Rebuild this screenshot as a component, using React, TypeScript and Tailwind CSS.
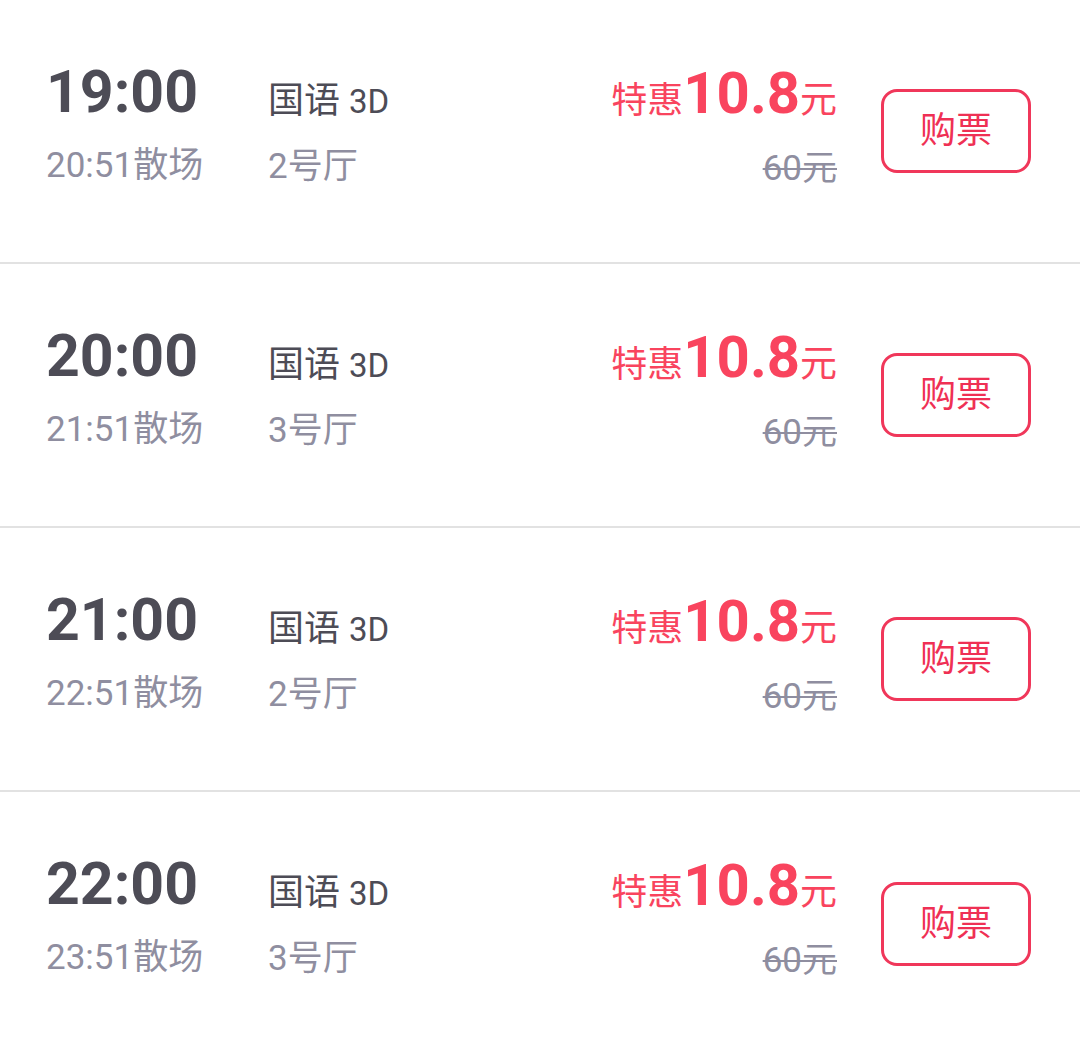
const shows = [
  { start: '19:00', end: '20:51', hall: '2号厅' },
  { start: '20:00', end: '21:51', hall: '3号厅' },
  { start: '21:00', end: '22:51', hall: '2号厅' },
  { start: '22:00', end: '23:51', hall: '3号厅' },
];

const font = "font-['Roboto','Noto_Sans_CJK_SC',sans-serif]";

export default function App() {
  return (
    <div className={`w-[1080px] h-[1054px] bg-white overflow-hidden ${font}`}>
      {shows.map((s, i) => (
        <div
          key={i}
          className={`flex items-center h-[264px] pl-[46px] pr-[49px] ${i < shows.length - 1 ? 'border-b-2 border-[#e2e2e2]' : ''}`}
        >
          <div className="flex-1 self-stretch flex items-start pt-[62px]">
            {/* start time / end time */}
            <div className="w-[222px] flex flex-col">
              <div className="text-[59px] font-bold text-[#4d4c56] leading-[60px]">{s.start}</div>
              <div className="text-[35px] text-[#8f8ea0] leading-[40px] mt-[24px]">{s.end}散场</div>
            </div>
            {/* language / hall */}
            <div className="flex flex-col mt-[19px]">
              <div className="text-[36px] text-[#4d4c56] leading-[40px]">
                国语 <span className="text-[33px]">3D</span>
              </div>
              <div className="text-[35px] text-[#8f8ea0] leading-[40px] mt-[25px]">{s.hall}</div>
            </div>
            {/* price */}
            <div className="flex-1 flex flex-col items-end mt-[1px]">
              <div className="flex items-baseline text-[#f9445e] leading-[60px]">
                <span className="text-[36px]">特惠</span>
                <span className="text-[58px] font-bold">10.8</span>
                <span className="text-[37px]">元</span>
              </div>
              <div className="text-[35px] text-[#8f8ea0] leading-[40px] mt-[18px] line-through decoration-2">60元</div>
            </div>
          </div>
          <div className="ml-[44px] w-[150px] h-[84px] rounded-[16px] border-[3px] border-[#f0375a] flex items-center justify-center text-[36px] text-[#ef3054]">
            购票
          </div>
        </div>
      ))}
    </div>
  );
}
